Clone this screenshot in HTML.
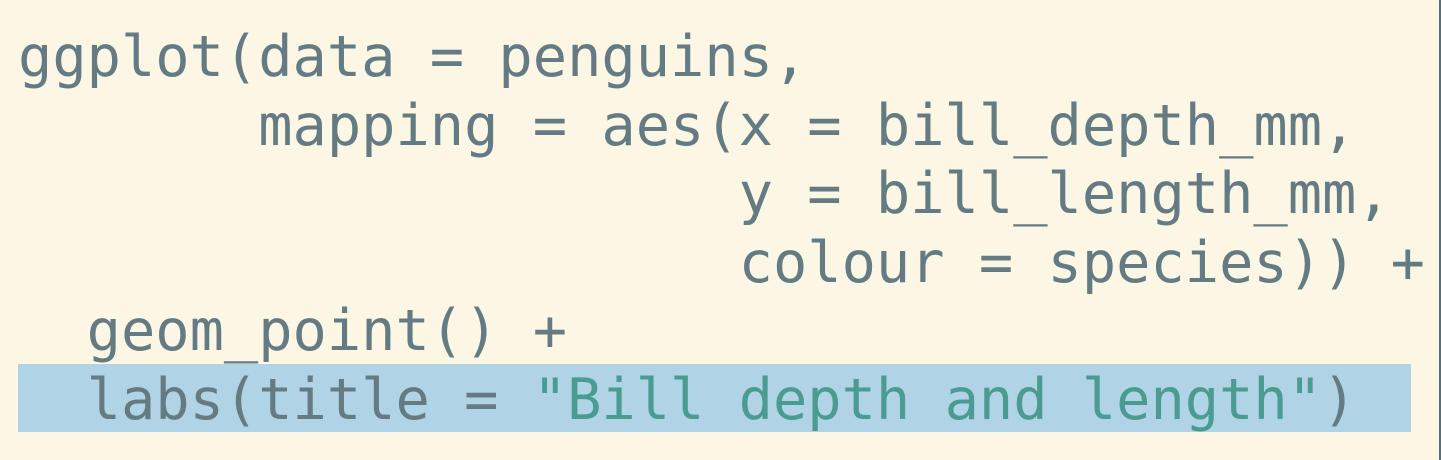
<!DOCTYPE html>
<html><head><style>
html,body{margin:0;padding:0;}
body{width:1441px;height:460px;background:#fcf6e4;position:relative;overflow:hidden;}
.b{position:absolute;right:0;top:0;width:2px;height:460px;background:#586e75;}
.hl{position:absolute;left:18px;top:364px;width:1393px;height:68px;background:#b0d3e5;}
pre{position:absolute;left:18px;top:23px;margin:0;font-family:"DejaVu Sans Mono","Liberation Mono",monospace;font-size:57px;line-height:68.5px;color:#657b83;}
.s{color:#4a9b91;}
</style></head><body>
<div class="hl"></div>
<div class="b"></div>
<pre>ggplot(data = penguins,
       mapping = aes(x = bill_depth_mm,
                     y = bill_length_mm,
                     colour = species)) +
  geom_point() +
  labs(title = <span class="s">"Bill depth and length"</span>)</pre>
</body></html>
